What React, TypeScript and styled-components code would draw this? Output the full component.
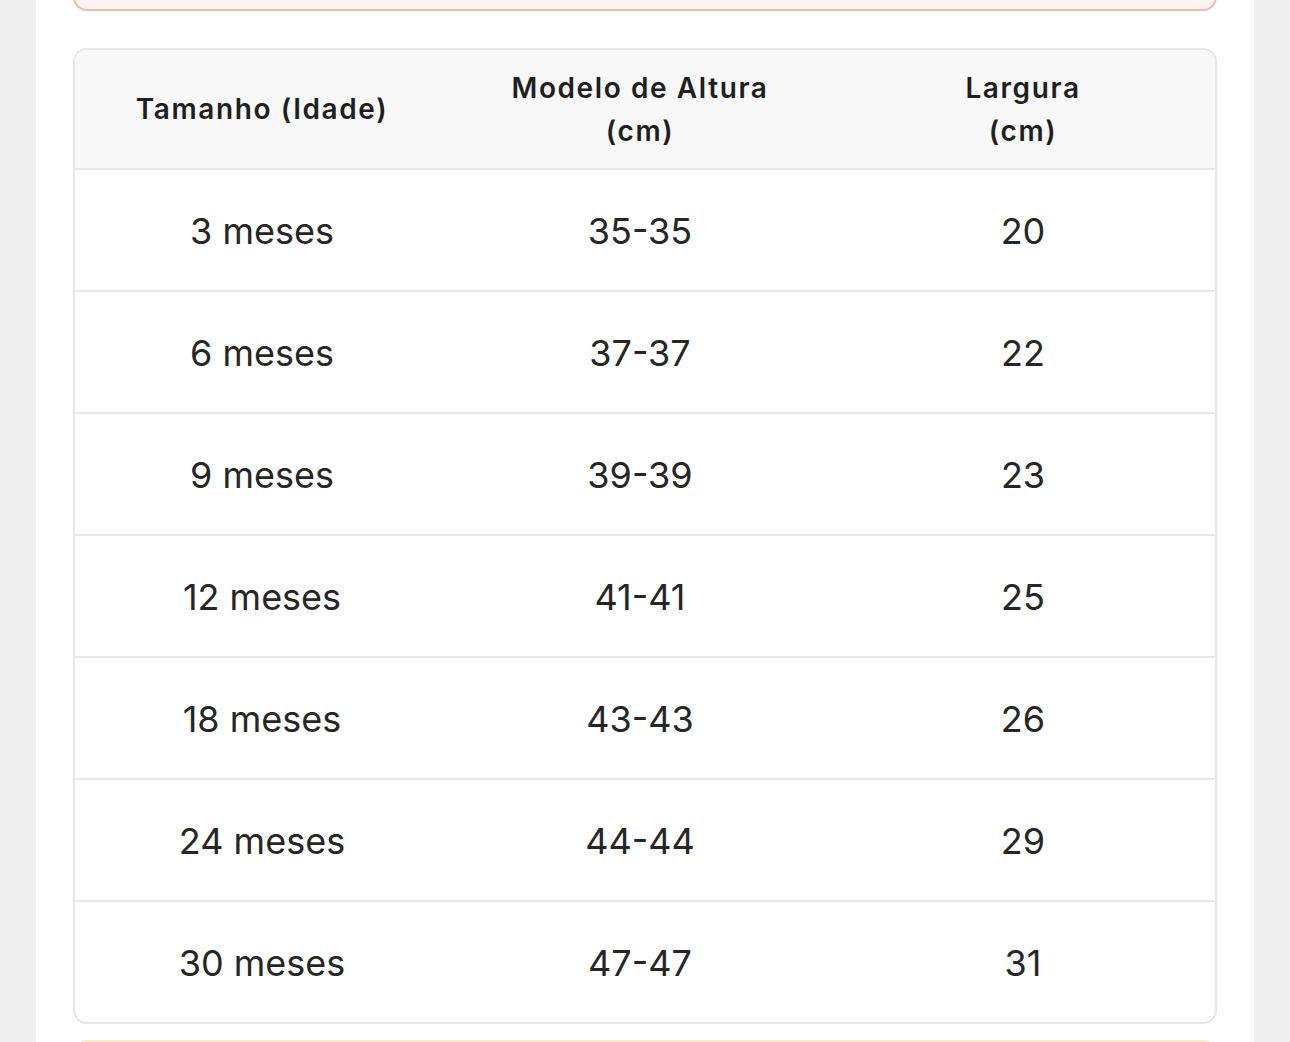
import React from "react";
import styled, { createGlobalStyle } from "styled-components";

const GlobalStyle = createGlobalStyle`
  html, body {
    margin: 0;
    padding: 0;
    background: #efefef;
    font-family: Inter, "Noto Sans", "Liberation Sans", sans-serif;
    overflow: hidden;
  }
`;

const Page = styled.div`
  width: 1218px;
  margin: 0 36px;
  height: 1042px;
  background: #ffffff;
  padding: 0 37px;
  box-sizing: border-box;
  overflow: hidden;
`;

const Notice = styled.div<{ $tone: "pink" | "yellow" }>`
  height: 60px;
  box-sizing: border-box;
  border-radius: 14px;
  border: 2px solid ${(p) => (p.$tone === "pink" ? "#f3b9ae" : "#f6ecc0")};
  background: ${(p) => (p.$tone === "pink" ? "#fdf3f1" : "#fffcee")};
`;

const TopNotice = styled(Notice)`
  margin-top: -49px;
`;

const BottomNotice = styled(Notice)`
  margin-top: 16px;
`;

const TableWrap = styled.div`
  margin-top: 37px;
  border: 2px solid #e7e7e7;
  border-radius: 14px;
  overflow: hidden;
`;

const Table = styled.table`
  width: 100%;
  border-collapse: separate;
  border-spacing: 0;
  table-layout: fixed;
`;

const HeadCell = styled.th<{ $w?: number }>`
  width: ${(p) => (p.$w ? `${p.$w}px` : "auto")};
  height: 120px;
  padding: 1px 12px 0;
  background: #f8f8f8;
  border-bottom: 2px solid #e7e7e7;
  font-size: 28px;
  line-height: 43px;
  font-weight: 600;
  letter-spacing: 1.6px;
  color: #1f1f1f;
  text-align: center;
  vertical-align: middle;
  box-sizing: border-box;
`;

const Row = styled.tr<{ $last: boolean }>`
  & > td {
    border-bottom: ${(p) => (p.$last ? "none" : "2px solid #e7e7e7")};
  }
`;

const Cell = styled.td`
  height: 118px;
  padding: 2px 12px 0;
  font-size: 36px;
  font-weight: 400;
  letter-spacing: 0px;
  color: #262626;
  text-align: center;
  vertical-align: middle;
`;

const rows = [
  ["3 meses", "35-35", "20"],
  ["6 meses", "37-37", "22"],
  ["9 meses", "39-39", "23"],
  ["12 meses", "41-41", "25"],
  ["18 meses", "43-43", "26"],
  ["24 meses", "44-44", "29"],
  ["30 meses", "47-47", "31"],
];

export default function App() {
  return (
    <>
      <GlobalStyle />
      <Page>
        <TopNotice $tone="pink" />
        <TableWrap>
          <Table>
            <thead>
              <tr>
                <HeadCell $w={374}>Tamanho (Idade)</HeadCell>
                <HeadCell $w={382}>
                  Modelo de Altura
                  <br />
                  (cm)
                </HeadCell>
                <HeadCell>
                  Largura
                  <br />
                  (cm)
                </HeadCell>
              </tr>
            </thead>
            <tbody>
              {rows.map((r, i) => (
                <Row key={r[0]} $last={i === rows.length - 1}>
                  {r.map((v, j) => (
                    <Cell key={j}>{v}</Cell>
                  ))}
                </Row>
              ))}
            </tbody>
          </Table>
        </TableWrap>
        <BottomNotice $tone="yellow" />
      </Page>
    </>
  );
}
